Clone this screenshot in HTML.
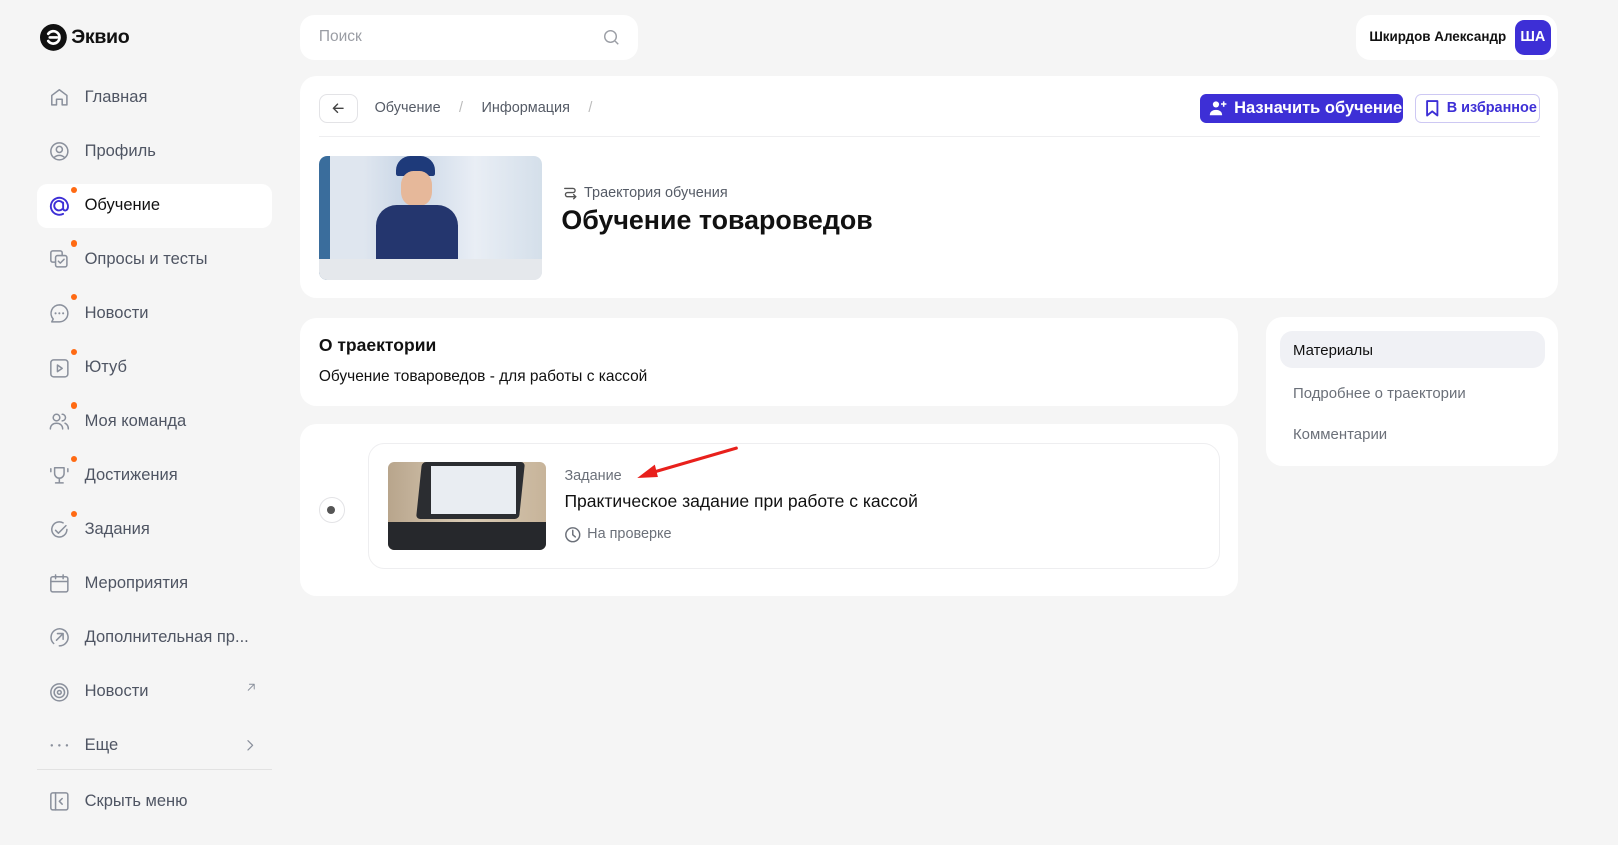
<!DOCTYPE html><html><head><meta charset="utf-8"><style>
*{box-sizing:border-box;margin:0;padding:0}
html,body{width:1618px;height:845px;overflow:hidden;background:#f5f5f5}
#w{zoom:1.0319;width:1568px;height:819px;position:relative;font-family:"Liberation Sans","DejaVu Sans",sans-serif;color:#111}
.a{position:absolute}
.card{position:absolute;background:#fff;border-radius:16px}
.it{position:absolute;left:36px;width:228px;height:43px;display:flex;align-items:center;font-size:16px;color:#4f5563}
.it svg{position:absolute;left:11px;width:22px;height:22px;fill:none;stroke:#8a909c;stroke-width:1.6;stroke-linecap:round;stroke-linejoin:round}
.it span{position:absolute;left:46px;white-space:nowrap}
.dot{position:absolute;left:33px;top:3px;width:6px;height:6px;border-radius:50%;background:#ff6a13}
.t{position:absolute;white-space:nowrap}
</style></head><body><div id="w">
<svg class="a" style="left:39px;top:23px" width="26" height="26" viewBox="0 0 26 26"><circle cx="13" cy="13" r="13" fill="#111"/><path d="M8 9.5a6 6 0 1 1 0 7M9.5 13h7" stroke="#fff" stroke-width="2.6" fill="none" stroke-linecap="round"/></svg>
<div class="t" style="left:69px;top:25px;font-size:19px;font-weight:600;letter-spacing:-0.3px">Эквио</div>
<div class="it" style="top:73px"><svg viewBox="0 0 24 24"><path d="M4 20V10l8-6 8 6v10h-5v-6h-6v6z"/></svg><span>Главная</span></div>
<div class="it" style="top:125px"><svg viewBox="0 0 24 24"><circle cx="12" cy="12" r="9"/><circle cx="12" cy="10" r="3.2"/><path d="M6.5 18.5c3-3 8-3 11 0"/></svg><span>Профиль</span></div>
<div class="it" style="top:178px;background:#fff;border-radius:10px;color:#111"><svg viewBox="0 0 24 24" style="stroke:#3d2fd6;stroke-width:2"><path d="M16 9a5 5 0 1 0-1 6M16 8v6c0 2 2 3 3.5 2 2-1.5 2-5 1-7A9 9 0 1 0 16 20"/></svg><i class="dot"></i><span>Обучение</span></div>
<div class="it" style="top:230px"><svg viewBox="0 0 24 24"><rect x="3" y="3" width="12" height="12" rx="2"/><rect x="8" y="8" width="12" height="12" rx="2" fill="#f5f5f5"/><path d="M11 14l2 2 4-4"/></svg><i class="dot"></i><span>Опросы и тесты</span></div>
<div class="it" style="top:282px"><svg viewBox="0 0 24 24"><path d="M12 3a9 9 0 0 1 0 18H4l1.5-3A9 9 0 0 1 12 3z"/><path d="M8 12h.01M12 12h.01M16 12h.01" stroke-width="2.2"/></svg><i class="dot"></i><span>Новости</span></div>
<div class="it" style="top:335px"><svg viewBox="0 0 24 24"><rect x="3" y="3" width="18" height="18" rx="3"/><path d="M10 8.5v7l5-3.5z"/></svg><i class="dot"></i><span>Ютуб</span></div>
<div class="it" style="top:387px"><svg viewBox="0 0 24 24"><circle cx="9" cy="8" r="3.5"/><path d="M2.5 20c0-4 3-6 6.5-6s6.5 2 6.5 6M15 4.5a3.5 3.5 0 0 1 0 7M18 14c2 1 3.5 3 3.5 6"/></svg><i class="dot"></i><span>Моя команда</span></div>
<div class="it" style="top:439px"><svg viewBox="0 0 24 24"><path d="M7 4h10v6a5 5 0 0 1-10 0zM12 15v5M8 20h8M3 5v3M21 5v3"/></svg><i class="dot"></i><span>Достижения</span></div>
<div class="it" style="top:492px"><svg viewBox="0 0 24 24"><path d="M20 11a8 8 0 1 1-4-6.9"/><path d="M8 12l3 3 8-8"/></svg><i class="dot"></i><span>Задания</span></div>
<div class="it" style="top:544px"><svg viewBox="0 0 24 24"><rect x="3" y="5" width="18" height="16" rx="2"/><path d="M3 10h18M8 3v4M16 3v4"/></svg><span>Мероприятия</span></div>
<div class="it" style="top:596px"><svg viewBox="0 0 24 24"><path d="M6 18.5A9 9 0 1 1 12 21"/><path d="M9 15l7-7M10 8h6v6"/></svg><span>Дополнительная пр...</span></div>
<div class="it" style="top:649px"><svg viewBox="0 0 24 24"><circle cx="12" cy="12" r="9"/><circle cx="12" cy="12" r="5.5"/><circle cx="12" cy="12" r="2"/></svg><span>Новости</span><svg viewBox="0 0 24 24" style="left:200px;top:10px;width:14px;height:14px"><path d="M7 17L17 7M9 7h8v8"/></svg></div>
<div class="it" style="top:701px"><svg viewBox="0 0 24 24"><path d="M4 12h.01M12 12h.01M20 12h.01" stroke-width="2.6"/></svg><span>Еще</span><svg viewBox="0 0 24 24" style="left:198px;width:18px;height:18px"><path d="M9 6l6 6-6 6"/></svg></div>
<div class="a" style="left:36px;top:745px;width:228px;height:1px;background:#e2e2e2"></div>
<div class="it" style="top:755px"><svg viewBox="0 0 24 24"><rect x="3" y="3" width="18" height="18" rx="2"/><path d="M8 3v18M15 9l-3 3 3 3"/></svg><span>Скрыть меню</span></div>
<div class="card" style="left:291px;top:15px;width:327px;height:43px;border-radius:14px"></div>
<div class="t" style="left:309px;top:27px;font-size:15px;color:#9a9da4">Поиск</div>
<svg class="a" style="left:583px;top:27px" width="18" height="18" viewBox="0 0 24 24" fill="none" stroke="#9a9da4" stroke-width="1.8"><circle cx="11" cy="11" r="7.5"/><path d="M17 17l4 4"/></svg>
<div class="card" style="left:1314px;top:15px;width:195px;height:43px;border-radius:14px"></div>
<div class="t" style="left:1327px;top:28px;font-size:13px;font-weight:bold">Шкирдов Александр</div>
<div class="a" style="left:1468px;top:19px;width:35px;height:34px;background:#3d2fd6;border-radius:9px;color:#fff;font-weight:bold;font-size:14px;display:flex;align-items:center;justify-content:center">ША</div>
<div class="card" style="left:291px;top:74px;width:1219px;height:215px"></div>
<div class="a" style="left:309px;top:91px;width:38px;height:28px;border:1px solid #e3e3e6;border-radius:8px"></div>
<svg class="a" style="left:320px;top:97px" width="16" height="16" viewBox="0 0 24 24" fill="none" stroke="#444" stroke-width="2" stroke-linecap="round"><path d="M19 12H5M11 6l-6 6 6 6"/></svg>
<div class="t" style="left:363px;top:97px;font-size:14px;color:#555b66">Обучение <span style="color:#bbb;margin:0 14px">/</span> Информация <span style="color:#bbb;margin-left:14px">/</span></div>
<div class="a" style="left:1163px;top:91px;width:197px;height:28px;background:#3d2fd6;border-radius:6px;color:#fff;font-size:16px;font-weight:bold;display:flex;align-items:center;padding-left:33px;white-space:nowrap">Назначить обучение</div>
<svg class="a" style="left:1172px;top:96px" width="18" height="18" viewBox="0 0 24 24" fill="#fff"><circle cx="9" cy="7" r="4"/><path d="M1 21c0-5 4-7 8-7s8 2 8 7z"/><path d="M19 3v7M15.5 6.5h7" stroke="#fff" stroke-width="2"/></svg>
<div class="a" style="left:1371px;top:91px;width:121px;height:28px;border:1px solid #cdc8f3;border-radius:6px;color:#3d2fd6;font-size:14px;font-weight:bold;display:flex;align-items:center;padding-left:30px;white-space:nowrap">В избранное</div>
<svg class="a" style="left:1380px;top:96px" width="16" height="18" viewBox="0 0 16 18" fill="none" stroke="#3d2fd6" stroke-width="1.8" stroke-linejoin="round"><path d="M3 2h10v14l-5-4-5 4z"/></svg>
<div class="a" style="left:309px;top:132px;width:1183px;height:1px;background:#eeeef0"></div>
<div class="a" style="left:309px;top:151px;width:216px;height:120px;border-radius:8px;overflow:hidden;background:linear-gradient(90deg,#3a6d9c 0 5%,#dfe6ef 5% 20%,#c9d6e6 40%,#e9eef5 70%,#d4dfea)">
<div class="a" style="left:75px;top:0;width:38px;height:20px;background:#1e3a7a;border-radius:14px 14px 2px 2px"></div>
<div class="a" style="left:80px;top:15px;width:30px;height:34px;background:#e6b89a;border-radius:40%"></div>
<div class="a" style="left:55px;top:48px;width:80px;height:60px;background:#24366e;border-radius:20px 20px 0 0"></div>
<div class="a" style="left:0;top:100px;width:216px;height:20px;background:#e5e8ec"></div></div>
<svg class="a" style="left:545px;top:179px" width="16" height="16" viewBox="0 0 24 24" fill="none" stroke="#555" stroke-width="2" stroke-linecap="round"><path d="M4 5h12a3 3 0 0 1 0 6H8a3 3 0 0 0 0 6h12M17 14l3 3-3 3"/></svg>
<div class="t" style="left:566px;top:179px;font-size:14px;color:#555b66">Траектория обучения</div>
<div class="t" style="left:544px;top:199px;font-size:26px;font-weight:bold">Обучение товароведов</div>
<div class="card" style="left:291px;top:308px;width:909px;height:85px"></div>
<div class="t" style="left:309px;top:325px;font-size:17px;font-weight:bold">О траектории</div>
<div class="t" style="left:309px;top:357px;font-size:15px">Обучение товароведов - для работы с кассой</div>
<div class="card" style="left:291px;top:411px;width:909px;height:167px"></div>
<div class="a" style="left:309px;top:482px;width:25px;height:25px;border:1.5px solid #e3e3e6;border-radius:50%"></div>
<div class="a" style="left:317px;top:490px;width:8px;height:8px;background:#555;border-radius:50%"></div>
<div class="a" style="left:357px;top:429px;width:825px;height:122px;border:1px solid #eeeef0;border-radius:16px"></div>
<div class="a" style="left:376px;top:448px;width:153px;height:85px;border-radius:6px;overflow:hidden;background:linear-gradient(90deg,#b8a58c,#d9cbb5 50%,#c7b49a)">
<div class="a" style="left:30px;top:0;width:100px;height:55px;background:#2b2d31;border-radius:4px;transform:skewX(-6deg)"></div>
<div class="a" style="left:42px;top:4px;width:82px;height:46px;background:#e9edf2"></div>
<div class="a" style="left:0;top:58px;width:153px;height:27px;background:#26282c"></div></div>
<div class="t" style="left:547px;top:454px;font-size:14px;color:#6b7079">Задание</div>
<div class="t" style="left:547px;top:476px;font-size:17px">Практическое задание при работе с кассой</div>
<svg class="a" style="left:547px;top:510px" width="17" height="17" viewBox="0 0 24 24" fill="none" stroke="#6b7079" stroke-width="2" stroke-linecap="round"><circle cx="12" cy="12" r="9.5"/><path d="M12 6v6l3.5 3"/></svg>
<div class="t" style="left:569px;top:510px;font-size:14px;color:#6b7079">На проверке</div>
<svg class="a" style="left:610px;top:430px" width="110" height="40" viewBox="0 0 110 40"><path d="M104 4L18 29" stroke="#e8201c" stroke-width="3" stroke-linecap="round"/><path d="M8 33l17-13 3 12z" fill="#e8201c"/></svg>
<div class="card" style="left:1227px;top:307px;width:283px;height:145px"></div>
<div class="a" style="left:1240px;top:321px;width:257px;height:36px;background:#f0f1f5;border-radius:12px"></div>
<div class="t" style="left:1253px;top:331px;font-size:14.5px">Материалы</div>
<div class="t" style="left:1253px;top:373px;font-size:14.5px;color:#6b7079">Подробнее о траектории</div>
<div class="t" style="left:1253px;top:413px;font-size:14.5px;color:#6b7079">Комментарии</div>
</div></body></html>
